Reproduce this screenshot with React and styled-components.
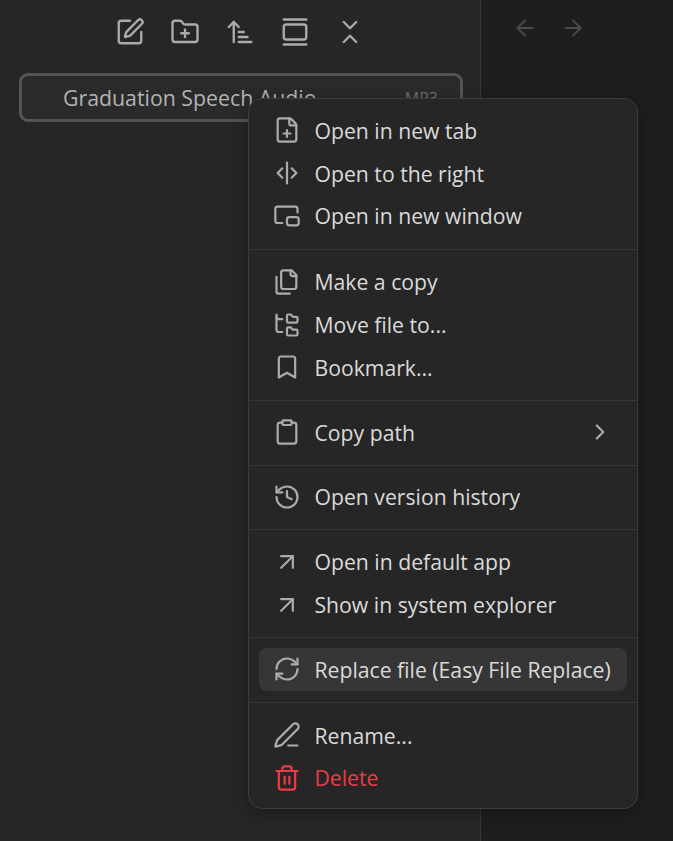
import React from 'react';
import styled, { createGlobalStyle } from 'styled-components';
import {
  SquarePen, FolderPlus, ArrowUpNarrowWide, GalleryVertical, ChevronsDownUp,
  ArrowLeft, ArrowRight, FilePlus, SeparatorVertical, PictureInPicture2,
  FolderTree, Bookmark, Clipboard, History, ArrowUpRight, RefreshCw, PenLine,
  Trash2, ChevronRight,
} from 'lucide-react';

const Global = createGlobalStyle`
  html, body { margin: 0; height: 100%; background: #1e1e1e; }
  body { font-family: "Open Sans", "Noto Sans", sans-serif; overflow: hidden; }
  #root { height: 100%; }
`;

const Files = props => (
  <svg xmlns="http://www.w3.org/2000/svg" width="24" height="24" viewBox="0 0 24 24" fill="none" stroke="currentColor" strokeWidth="2" strokeLinecap="round" strokeLinejoin="round" {...props}>
    <path d="M20 7h-3a2 2 0 0 1-2-2V2" />
    <path d="M9 18a2 2 0 0 1-2-2V4a2 2 0 0 1 2-2h7l4 4v10a2 2 0 0 1-2 2Z" />
    <path d="M3 7.6v12.8A1.6 1.6 0 0 0 4.6 22h9.8" />
  </svg>
);

const sections = [
  [
    { icon: FilePlus, label: 'Open in new tab' },
    { icon: SeparatorVertical, label: 'Open to the right' },
    { icon: PictureInPicture2, label: 'Open in new window' },
  ],
  [
    { icon: Files, label: 'Make a copy' },
    { icon: FolderTree, label: 'Move file to...' },
    { icon: Bookmark, label: 'Bookmark...' },
  ],
  [{ icon: Clipboard, label: 'Copy path', more: true }],
  [{ icon: History, label: 'Open version history' }],
  [
    { icon: ArrowUpRight, label: 'Open in default app' },
    { icon: ArrowUpRight, label: 'Show in system explorer' },
  ],
  [{ icon: RefreshCw, label: 'Replace file (Easy File Replace)', active: true }],
  [
    { icon: PenLine, label: 'Rename...' },
    { icon: Trash2, label: 'Delete', danger: true },
  ],
];

const App = () => (
  <Page>
    <Global />
    <Sidebar>
      <Toolbar>
        <SquarePen />
        <FolderPlus />
        <ArrowUpNarrowWide />
        <GalleryVertical />
        <ChevronsDownUp />
      </Toolbar>
      <FileRow>
        <FileName>Graduation Speech Audio</FileName>
        <FileExt>MP3</FileExt>
      </FileRow>
    </Sidebar>
    <Main>
      <NavButtons>
        <ArrowLeft />
        <ArrowRight />
      </NavButtons>
    </Main>
    <Menu>
      {sections.map((items, i) => (
        <Section key={i}>
          {items.map(({ icon: Icon, label, more, active, danger }) => (
            <Item key={label} $active={active} $danger={danger}>
              <IconSlot $danger={danger}>
                <Icon />
              </IconSlot>
              <Label>{label}</Label>
              {more && (
                <More>
                  <ChevronRight />
                </More>
              )}
            </Item>
          ))}
        </Section>
      ))}
    </Menu>
  </Page>
);

const Page = styled.div`
  display: flex;
  height: 841px;
  width: 673px;
  overflow: hidden;
  position: relative;
`;

const Sidebar = styled.div`
  flex-shrink: 0;
  width: 481px;
  box-sizing: border-box;
  background: #262626;
  border-right: 1px solid #363636;
  display: flex;
  flex-direction: column;
  padding: 17px 17px 0 19px;
`;

const Toolbar = styled.div`
  display: flex;
  justify-content: center;
  gap: 25px;
  color: #ababab;
  height: 31px;
  padding-right: 2px;

  svg {
    width: 30px;
    height: 30px;
    stroke-width: 1.9;
  }
`;

const FileRow = styled.div`
  margin-top: 25px;
  height: 49px;
  box-sizing: border-box;
  border: 3px solid #545454;
  border-radius: 9px;
  display: flex;
  align-items: center;
  justify-content: space-between;
  padding-left: 41px;
  background: #2a2a2a;
  color: #b3b3b3;
`;

const FileName = styled.span`
  font-size: 21.3px;
`;

const FileExt = styled.span`
  font-size: 16px;
  color: #6e6e6e;
  margin-right: 22px;
`;

const Main = styled.div`
  flex: 1;
  background: #1e1e1e;
`;

const NavButtons = styled.div`
  display: flex;
  gap: 22px;
  padding: 15px 0 0 31px;
  color: #4a4a4a;

  svg {
    width: 26px;
    height: 26px;
    stroke-width: 1.8;
  }
`;

const Menu = styled.div`
  position: absolute;
  left: 248px;
  top: 98px;
  width: 390px;
  box-sizing: border-box;
  background: #262626;
  border: 1px solid #3d3d3d;
  border-radius: 14px;
  box-shadow: 0 4px 16px rgba(0, 0, 0, 0.3);
`;

const Section = styled.div`
  padding: 10px 10px 11px;
  border-bottom: 1px solid #363636;

  &:first-child {
    padding-bottom: 12px;
  }

  &:last-child {
    padding-top: 11px;
    padding-bottom: 9px;
    border-bottom: none;
  }
`;

const Item = styled.div`
  display: flex;
  align-items: center;
  height: 42.8px;
  padding: 0 13.5px;
  border-radius: 8px;
  color: ${p => (p.$danger ? '#ee3a47' : '#dadada')};
  background: ${p => (p.$active ? '#363636' : 'transparent')};
`;

const IconSlot = styled.span`
  width: 28px;
  height: 28px;
  margin-right: 14px;
  flex-shrink: 0;
  color: ${p => (p.$danger ? '#ee3a47' : '#ababab')};

  svg {
    width: 28px;
    height: 28px;
    stroke-width: 1.9;
    display: block;
  }
`;

const Label = styled.span`
  font-size: 21.2px;
  white-space: nowrap;
  flex: 1;
`;

const More = styled.span`
  display: flex;
  color: #ababab;
  margin-right: 1px;

  svg {
    width: 26px;
    height: 26px;
    stroke-width: 2;
  }
`;

export default App;
